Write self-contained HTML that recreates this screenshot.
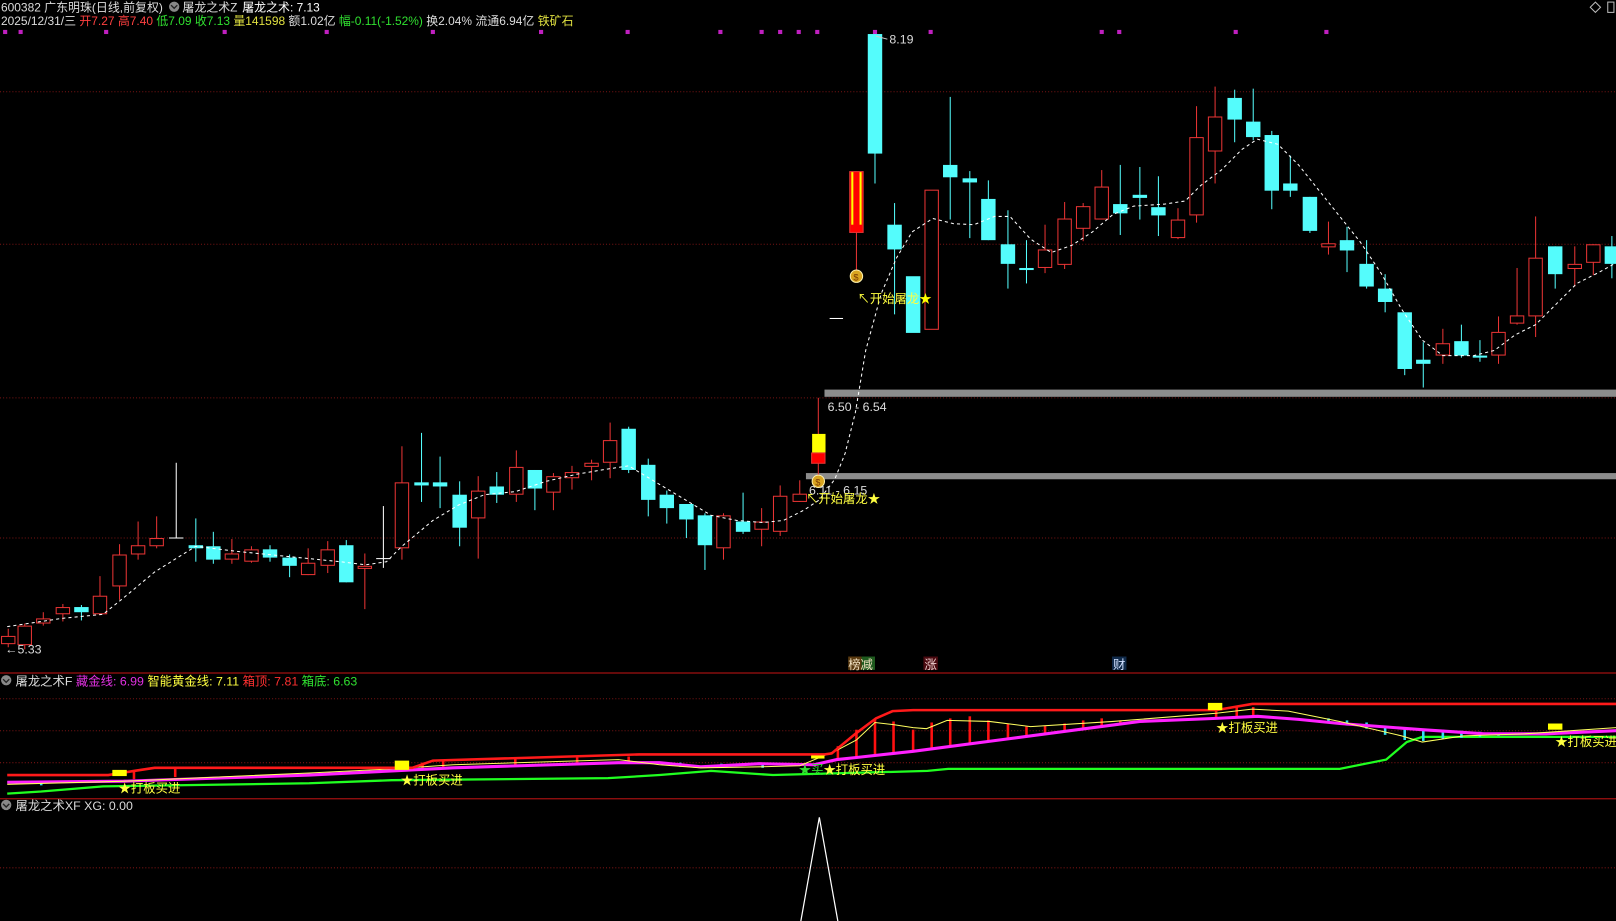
<!DOCTYPE html>
<html><head><meta charset="utf-8"><style>
html,body{margin:0;padding:0;background:#000;width:1616px;height:921px;overflow:hidden}
svg{display:block}
text{font-family:"Liberation Sans","Noto Sans CJK SC",sans-serif;font-size:12px}
.hd{font-size:11.6px}
.r{stroke:#e83434;fill:#000;stroke-width:1}
.rl{stroke:#e83434;stroke-width:1}
.c{fill:#54fcfc}
.cl{stroke:#54fcfc;stroke-width:1}
.g{stroke:#7a1414;stroke-width:1;stroke-dasharray:1 2}
</style></head><body>
<svg width="1616" height="921" viewBox="0 0 1568 893.6" xmlns="http://www.w3.org/2000/svg">
<rect x="0" y="0" width="1568" height="894" fill="#000"/>
<!-- header -->
<text class="hd" x="1" y="11" fill="#dcdcdc">600382 广东明珠(日线,前复权)</text>
<circle cx="169" cy="6.5" r="5" fill="#888"/><path d="M166 5l3 3 3-3" stroke="#222" fill="none" stroke-width="1.3"/>
<text class="hd" x="177" y="11" fill="#dcdcdc">屠龙之术Z</text>
<text class="hd" x="235" y="11" fill="#fff">屠龙之术: 7.13</text>
<text class="hd" x="1" y="24"><tspan fill="#dcdcdc">2025/12/31/三 </tspan><tspan fill="#ff4040">开7.27 高7.40 </tspan><tspan fill="#30e030">低7.09 </tspan><tspan fill="#30e030">收7.13 </tspan><tspan fill="#e0e040">量141598 </tspan><tspan fill="#dcdcdc">额1.02亿 </tspan><tspan fill="#30e030">幅-0.11(-1.52%) </tspan><tspan fill="#dcdcdc">换2.04% 流通6.94亿 </tspan><tspan fill="#e0e040">铁矿石</tspan></text>
<path d="M1548 2l5 5-5 5-5-5z" stroke="#bbb" fill="none"/>
<rect x="1560" y="2" width="6" height="10" stroke="#bbb" fill="none"/>
<g fill="#c020c0">
<rect x="3" y="29" width="4" height="4"/><rect x="18" y="29" width="4" height="4"/><rect x="101" y="29" width="4" height="4"/><rect x="216" y="29" width="4" height="4"/><rect x="315" y="29" width="4" height="4"/><rect x="418" y="29" width="4" height="4"/><rect x="523" y="29" width="4" height="4"/><rect x="607" y="29" width="4" height="4"/><rect x="697" y="29" width="4" height="4"/><rect x="737" y="29" width="4" height="4"/><rect x="755" y="29" width="4" height="4"/><rect x="773" y="29" width="4" height="4"/><rect x="791" y="29" width="4" height="4"/><rect x="847" y="29" width="4" height="4"/><rect x="901" y="29" width="4" height="4"/><rect x="1067" y="29" width="4" height="4"/><rect x="1084" y="29" width="4" height="4"/><rect x="1197" y="29" width="4" height="4"/><rect x="1285" y="29" width="4" height="4"/>
</g>
<!-- grid -->
<line class="g" x1="0" y1="89" x2="1568" y2="89"/>
<line class="g" x1="0" y1="237" x2="1568" y2="237"/>
<line class="g" x1="0" y1="386" x2="1568" y2="386"/>
<line class="g" x1="0" y1="522" x2="1568" y2="522"/>
<!-- gray bars -->
<rect x="800" y="378" width="768" height="7" fill="#8c8c8c"/>
<rect x="782" y="459" width="786" height="6" fill="#8c8c8c"/>
<!-- candles -->
<g id="candles">
<line class="rl" x1="8" y1="610" x2="8" y2="628"/><rect class="r" x="1.5" y="617.5" width="13" height="7"/>
<line class="rl" x1="24" y1="605" x2="24" y2="630"/><rect class="r" x="17.5" y="607.5" width="13" height="18"/>
<line class="rl" x1="42" y1="594" x2="42" y2="607"/><rect class="r" x="35.5" y="600.5" width="13" height="4"/>
<line class="rl" x1="61" y1="586" x2="61" y2="603"/><rect class="r" x="54.5" y="589.5" width="13" height="6"/>
<line class="cl" x1="79" y1="587" x2="79" y2="602"/><rect class="c" x="72" y="589" width="14" height="5"/>
<line class="rl" x1="97" y1="559" x2="97" y2="597"/><rect class="r" x="90.5" y="578.5" width="13" height="17"/>
<line class="rl" x1="116" y1="528" x2="116" y2="582"/><rect class="r" x="109.5" y="538.5" width="13" height="30"/>
<line class="rl" x1="134" y1="506" x2="134" y2="543"/><rect class="r" x="127.5" y="529.5" width="13" height="8"/>
<line class="rl" x1="152" y1="501" x2="152" y2="532"/><rect class="r" x="145.5" y="522.5" width="13" height="7"/>
<line stroke="#fff" x1="171" y1="449" x2="171" y2="522"/><line stroke="#fff" x1="164" y1="522" x2="178" y2="522"/>
<line class="cl" x1="190" y1="503" x2="190" y2="545"/><rect class="c" x="183" y="529" width="14" height="3"/>
<line class="cl" x1="207" y1="516" x2="207" y2="547"/><rect class="c" x="200" y="530" width="14" height="13"/>
<line class="rl" x1="225" y1="523" x2="225" y2="547"/><rect class="r" x="218.5" y="537.5" width="13" height="5"/>
<line class="rl" x1="244" y1="530" x2="244" y2="546"/><rect class="r" x="237.5" y="533.5" width="13" height="11"/>
<line class="cl" x1="262" y1="529" x2="262" y2="545"/><rect class="c" x="255" y="533" width="14" height="8"/>
<line class="cl" x1="281" y1="538" x2="281" y2="560"/><rect class="c" x="274" y="541" width="14" height="8"/>
<line class="rl" x1="299" y1="532" x2="299" y2="558"/><rect class="r" x="292.5" y="546.5" width="13" height="11"/>
<line class="rl" x1="318" y1="525" x2="318" y2="556"/><rect class="r" x="311.5" y="533.5" width="13" height="15"/>
<line class="cl" x1="336" y1="524" x2="336" y2="565"/><rect class="c" x="329" y="529" width="14" height="36"/>
<line class="rl" x1="354" y1="537" x2="354" y2="591"/><rect class="r" x="347.5" y="549.5" width="13" height="2"/>
<line stroke="#fff" x1="372" y1="491" x2="372" y2="551"/><line stroke="#fff" x1="365" y1="542" x2="379" y2="542"/>
<line class="rl" x1="390" y1="433" x2="390" y2="543"/><rect class="r" x="383.5" y="468.5" width="13" height="63"/>
<line class="cl" x1="409" y1="420" x2="409" y2="487"/><rect class="c" x="402" y="468" width="14" height="3"/>
<line class="cl" x1="427" y1="443" x2="427" y2="493"/><rect class="c" x="420" y="468" width="14" height="4"/>
<line class="cl" x1="446" y1="467" x2="446" y2="530"/><rect class="c" x="439" y="480" width="14" height="32"/>
<line class="rl" x1="464" y1="462" x2="464" y2="542"/><rect class="r" x="457.5" y="476.5" width="13" height="26"/>
<line class="cl" x1="482" y1="458" x2="482" y2="488"/><rect class="c" x="475" y="472" width="14" height="8"/>
<line class="rl" x1="501" y1="437" x2="501" y2="487"/><rect class="r" x="494.5" y="453.5" width="13" height="26"/>
<line class="cl" x1="519" y1="456" x2="519" y2="495"/><rect class="c" x="512" y="456" width="14" height="18"/>
<line class="rl" x1="537" y1="459" x2="537" y2="495"/><rect class="r" x="530.5" y="462.5" width="13" height="15"/>
<line class="rl" x1="555" y1="452" x2="555" y2="475"/><rect class="r" x="548.5" y="458.5" width="13" height="5"/>
<line class="rl" x1="574" y1="446" x2="574" y2="466"/><rect class="r" x="567.5" y="449.5" width="13" height="3"/>
<line class="rl" x1="592" y1="410" x2="592" y2="464"/><rect class="r" x="585.5" y="427.5" width="13" height="21"/>
<line class="cl" x1="610" y1="414" x2="610" y2="459"/><rect class="c" x="603" y="416" width="14" height="40"/>
<line class="cl" x1="629" y1="445" x2="629" y2="501"/><rect class="c" x="622" y="451" width="14" height="34"/>
<line class="cl" x1="647" y1="476" x2="647" y2="508"/><rect class="c" x="640" y="480" width="14" height="13"/>
<line class="cl" x1="666" y1="489" x2="666" y2="522"/><rect class="c" x="659" y="489" width="14" height="15"/>
<line class="cl" x1="684" y1="498" x2="684" y2="553"/><rect class="c" x="677" y="500" width="14" height="29"/>
<line class="rl" x1="702" y1="498" x2="702" y2="543"/><rect class="r" x="695.5" y="500.5" width="13" height="31"/>
<line class="cl" x1="721" y1="478" x2="721" y2="518"/><rect class="c" x="714" y="506" width="14" height="10"/>
<line class="rl" x1="739" y1="493" x2="739" y2="530"/><rect class="r" x="732.5" y="506.5" width="13" height="7"/>
<line class="rl" x1="757" y1="471" x2="757" y2="520"/><rect class="r" x="750.5" y="481.5" width="13" height="34"/>
<line class="rl" x1="776" y1="466" x2="776" y2="487"/><rect class="r" x="769.5" y="479.5" width="13" height="7"/>
<line class="rl" x1="794" y1="386" x2="794" y2="462"/>
<rect x="788" y="421" width="13" height="18" fill="#ffff00"/>
<rect x="787.5" y="439.5" width="13" height="10" fill="#ff0000" stroke="#e83434"/>
<line stroke="#fff" x1="805" y1="309" x2="818" y2="309"/>
<line class="rl" x1="831" y1="225" x2="831" y2="262"/>
<rect x="824.5" y="166.5" width="13" height="59" fill="#ff0000" stroke="#e83434"/>
<rect x="826" y="167" width="2" height="51" fill="#ffff00"/><rect x="834" y="167" width="2" height="51" fill="#ffff00"/>
<line class="cl" x1="849" y1="33" x2="849" y2="178"/><rect class="c" x="842" y="33" width="14" height="116"/>
<line class="cl" x1="868" y1="197" x2="868" y2="305"/><rect class="c" x="861" y="218" width="14" height="24"/>
<rect class="c" x="879" y="268" width="14" height="55"/>
<rect class="r" x="897.5" y="184.5" width="13" height="135"/>
<line class="cl" x1="922" y1="94" x2="922" y2="213"/><rect class="c" x="915" y="160" width="14" height="12"/>
<line class="cl" x1="941" y1="166" x2="941" y2="231"/><rect class="c" x="934" y="173" width="14" height="4"/>
<line class="cl" x1="959" y1="175" x2="959" y2="233"/><rect class="c" x="952" y="193" width="14" height="40"/>
<line class="cl" x1="978" y1="204" x2="978" y2="280"/><rect class="c" x="971" y="237" width="14" height="19"/>
<line class="cl" x1="996" y1="233" x2="996" y2="275"/><rect class="c" x="989" y="260" width="14" height="2"/>
<line class="rl" x1="1014" y1="218" x2="1014" y2="265"/><rect class="r" x="1007.5" y="242.5" width="13" height="17"/>
<line class="rl" x1="1033" y1="196" x2="1033" y2="261"/><rect class="r" x="1026.5" y="212.5" width="13" height="44"/>
<line class="rl" x1="1051" y1="197" x2="1051" y2="234"/><rect class="r" x="1044.5" y="200.5" width="13" height="21"/>
<line class="rl" x1="1069" y1="165" x2="1069" y2="212"/><rect class="r" x="1062.5" y="181.5" width="13" height="31"/>
<line class="cl" x1="1087" y1="160" x2="1087" y2="228"/><rect class="c" x="1080" y="198" width="14" height="9"/>
<line class="cl" x1="1106" y1="162" x2="1106" y2="213"/><rect class="c" x="1099" y="189" width="14" height="3"/>
<line class="cl" x1="1124" y1="171" x2="1124" y2="229"/><rect class="c" x="1117" y="201" width="14" height="8"/>
<line class="rl" x1="1143" y1="202" x2="1143" y2="232"/><rect class="r" x="1136.5" y="213.5" width="13" height="17"/>
<line class="rl" x1="1161" y1="103" x2="1161" y2="216"/><rect class="r" x="1154.5" y="133.5" width="13" height="75"/>
<line class="rl" x1="1179" y1="84" x2="1179" y2="178"/><rect class="r" x="1172.5" y="113.5" width="13" height="33"/>
<line class="cl" x1="1198" y1="87" x2="1198" y2="138"/><rect class="c" x="1191" y="95" width="14" height="21"/>
<line class="cl" x1="1216" y1="86" x2="1216" y2="136"/><rect class="c" x="1209" y="118" width="14" height="15"/>
<line class="cl" x1="1234" y1="127" x2="1234" y2="203"/><rect class="c" x="1227" y="131" width="14" height="54"/>
<line class="cl" x1="1252" y1="151" x2="1252" y2="191"/><rect class="c" x="1245" y="178" width="14" height="7"/>
<line class="cl" x1="1271" y1="191" x2="1271" y2="226"/><rect class="c" x="1264" y="191" width="14" height="33"/>
<line class="rl" x1="1289" y1="215" x2="1289" y2="247"/><rect class="r" x="1282.5" y="236.5" width="13" height="3"/>
<line class="cl" x1="1307" y1="220" x2="1307" y2="264"/><rect class="c" x="1300" y="233" width="14" height="10"/>
<line class="cl" x1="1326" y1="233" x2="1326" y2="280"/><rect class="c" x="1319" y="256" width="14" height="22"/>
<line class="cl" x1="1344" y1="266" x2="1344" y2="303"/><rect class="c" x="1337" y="280" width="14" height="13"/>
<line class="cl" x1="1363" y1="303" x2="1363" y2="364"/><rect class="c" x="1356" y="303" width="14" height="55"/>
<line class="cl" x1="1381" y1="332" x2="1381" y2="376"/><rect class="c" x="1374" y="349" width="14" height="4"/>
<line class="rl" x1="1400" y1="319" x2="1400" y2="353"/><rect class="r" x="1393.5" y="333.5" width="13" height="11"/>
<line class="cl" x1="1418" y1="315" x2="1418" y2="347"/><rect class="c" x="1411" y="331" width="14" height="14"/>
<line class="cl" x1="1436" y1="330" x2="1436" y2="351"/><rect class="c" x="1429" y="345" width="14" height="2"/>
<line class="rl" x1="1454" y1="307" x2="1454" y2="353"/><rect class="r" x="1447.5" y="322.5" width="13" height="22"/>
<line class="rl" x1="1472" y1="260" x2="1472" y2="315"/><rect class="r" x="1465.5" y="306.5" width="13" height="7"/>
<line class="rl" x1="1490" y1="210" x2="1490" y2="327"/><rect class="r" x="1483.5" y="250.5" width="13" height="56"/>
<line class="cl" x1="1509" y1="239" x2="1509" y2="280"/><rect class="c" x="1502" y="239" width="14" height="27"/>
<line class="rl" x1="1528" y1="239" x2="1528" y2="278"/><rect class="r" x="1521.5" y="256.5" width="13" height="4"/>
<line class="rl" x1="1546" y1="237" x2="1546" y2="267"/><rect class="r" x="1539.5" y="237.5" width="13" height="17"/>
<line class="cl" x1="1564" y1="229" x2="1564" y2="270"/><rect class="c" x="1557" y="239" width="11" height="17"/>
</g>
<polyline fill="none" stroke="#fff" stroke-width="1" stroke-dasharray="3 3" points="7,608 60,600 100,596 120,580 150,555 190,530 230,535 280,540 330,545 355,548 375,545 390,530 420,505 445,490 470,480 500,477 530,467 560,460 590,455 610,452 640,470 665,485 690,500 715,505 740,507 760,505 780,495 795,485 810,465 820,440 830,400 840,340 855,285 870,250 885,225 905,212 925,217 945,218 965,210 980,210 1000,232 1020,245 1040,238 1060,225 1080,208 1100,200 1130,198 1150,195 1165,180 1185,165 1205,145 1220,135 1240,140 1260,160 1280,185 1300,210 1320,235 1340,265 1360,300 1380,330 1400,345 1430,345 1450,340 1470,325 1490,315 1510,295 1530,275 1550,265 1568,255"/>
<g>
<circle cx="831" cy="268" r="6" fill="#d9a520" stroke="#fff3b0" stroke-width="1"/><text x="828" y="272" fill="#7a3a00" style="font-size:9px">$</text>
<circle cx="794" cy="467" r="6" fill="#d9a520" stroke="#fff3b0" stroke-width="1"/><text x="791" y="471" fill="#7a3a00" style="font-size:9px">$</text>
</g>
<text x="863" y="42" fill="#dcdcdc">8.19</text><line x1="850" y1="35" x2="861" y2="38" stroke="#ccc"/>
<text x="803" y="399" fill="#dcdcdc">6.50 - 6.54</text>
<text x="785" y="480" fill="#dcdcdc">6.11 - 6.15</text>
<text x="832" y="294" fill="#ffff40">↖开始屠龙<tspan fill="#ffff00">★</tspan></text>
<text x="782" y="488" fill="#ffff40">↖开始屠龙★</text>
<text x="5" y="634" fill="#dcdcdc">←5.33</text>
<rect x="823" y="637" width="13" height="13" fill="#5a3a10"/><rect x="836" y="637" width="13" height="13" fill="#1e5a1e"/>
<text x="823" y="649" fill="#f0e0c0">榜减</text>
<rect x="896" y="637" width="14" height="13" fill="#4a0a10"/><text x="897" y="649" fill="#f0d0d0">涨</text>
<rect x="1079" y="637" width="14" height="13" fill="#102a4a"/><text x="1080" y="649" fill="#d0e0ff">财</text>
<line x1="0" y1="653" x2="1568" y2="653" stroke="#a01010" stroke-width="1.2"/>
<circle cx="6" cy="660" r="5" fill="#888"/><path d="M3 659l3 3 3-3" stroke="#222" fill="none" stroke-width="1.3"/>
<text x="15" y="665"><tspan fill="#dcdcdc">屠龙之术F </tspan><tspan fill="#e030e0">藏金线: 6.99 </tspan><tspan fill="#ffff40">智能黄金线: 7.11 </tspan><tspan fill="#ff3030">箱顶: 7.81 </tspan><tspan fill="#30e030">箱底: 6.63</tspan></text>
<line class="g" x1="0" y1="678" x2="1568" y2="678"/>
<line class="g" x1="0" y1="709" x2="1568" y2="709"/>
<line class="g" x1="0" y1="740" x2="1568" y2="740"/>
<polyline fill="none" stroke="#20ff20" stroke-width="2.2" points="7,770 40,768 100,763 300,760 380,757 590,755 640,752 690,748 750,752 900,748 920,746 1300,746 1330,740 1345,737 1365,720 1380,715 1568,715"/>
<g stroke="#ff1010" stroke-width="2.5">
<line x1="813" y1="724" x2="813" y2="737"/><line x1="831" y1="708" x2="831" y2="735"/><line x1="849" y1="698" x2="849" y2="733"/><line x1="867" y1="700" x2="867" y2="731"/><line x1="886" y1="708" x2="886" y2="729"/><line x1="904" y1="701" x2="904" y2="727"/><line x1="922" y1="697" x2="922" y2="724"/><line x1="941" y1="695" x2="941" y2="722"/><line x1="959" y1="699" x2="959" y2="719"/><line x1="978" y1="702" x2="978" y2="717"/><line x1="996" y1="705" x2="996" y2="714"/><line x1="1014" y1="704" x2="1014" y2="712"/><line x1="1033" y1="702" x2="1033" y2="709"/><line x1="1051" y1="699" x2="1051" y2="707"/><line x1="1069" y1="697" x2="1069" y2="705"/><line x1="1087" y1="699" x2="1087" y2="703"/>
<line x1="130" y1="749" x2="130" y2="756"/><line x1="170" y1="746" x2="170" y2="754"/><line x1="410" y1="740" x2="410" y2="747"/><line x1="430" y1="737" x2="430" y2="745"/><line x1="500" y1="736" x2="500" y2="743"/><line x1="560" y1="735" x2="560" y2="742"/><line x1="610" y1="734" x2="610" y2="741"/><line x1="1180" y1="688" x2="1180" y2="697"/><line x1="1200" y1="686" x2="1200" y2="696"/><line x1="1216" y1="686" x2="1216" y2="695"/>
</g>
<g stroke="#30e0f0" stroke-width="2.5">
<line x1="1289" y1="697" x2="1289" y2="701"/><line x1="1307" y1="699" x2="1307" y2="704"/><line x1="1326" y1="701" x2="1326" y2="707"/><line x1="1344" y1="704" x2="1344" y2="713"/><line x1="1363" y1="706" x2="1363" y2="718"/><line x1="1381" y1="707" x2="1381" y2="719"/><line x1="1400" y1="708" x2="1400" y2="717"/><line x1="1418" y1="709" x2="1418" y2="716"/><line x1="1436" y1="710" x2="1436" y2="715"/><line x1="1454" y1="711" x2="1454" y2="714"/>
<line x1="660" y1="740" x2="660" y2="744"/><line x1="700" y1="741" x2="700" y2="745"/><line x1="740" y1="741" x2="740" y2="745"/><line x1="40" y1="758" x2="40" y2="762"/>
</g>
<polyline fill="none" stroke="#ff20ff" stroke-width="3" points="7,759 120,758 300,752 380,748 440,745 600,740 640,740 680,744 737,741 790,742 812,737 831,735 886,729 977,717 1106,700 1180,697 1220,695 1260,698 1300,702 1380,708 1440,712 1500,712 1568,709"/>
<polyline fill="none" stroke="#ffff60" stroke-width="1" points="7,761 120,758 300,750 380,746 440,742 600,737 640,742 680,745 737,744 776,743 812,728 831,718 849,701 866,703 886,706 899,707 919,699 960,700 1000,705 1080,700 1180,692 1215,688 1250,690 1300,700 1360,714 1380,720 1420,714 1480,712 1568,706"/>
<polyline fill="none" stroke="#ff1a1a" stroke-width="2.5" points="7,752 105,752 130,748 150,745 400,745 420,738 620,732 800,732 807,731 830,712 850,697 866,690 886,689 1180,689 1215,683 1568,683"/>
<g fill="#ffff00">
<rect x="109" y="747" width="14" height="6"/><rect x="383" y="738" width="14" height="9"/><rect x="787" y="733" width="13" height="3"/><rect x="1172" y="682" width="14" height="7"/><rect x="1502" y="702" width="14" height="6"/>
</g>
<text x="115" y="769" fill="#ffff40">★打板买进</text>
<text x="389" y="761" fill="#ffff40">★打板买进</text>
<text x="775" y="751"><tspan fill="#30e030">★买</tspan><tspan fill="#ffff40">★打板买进</tspan></text>
<text x="1180" y="710" fill="#ffff40">★打板买进</text>
<text x="1509" y="724" fill="#ffff40">★打板买进</text>
<line x1="0" y1="775" x2="1568" y2="775" stroke="#a01010" stroke-width="1.2"/>
<circle cx="6" cy="781" r="5" fill="#888"/><path d="M3 780l3 3 3-3" stroke="#222" fill="none" stroke-width="1.3"/>
<text x="15" y="786" fill="#dcdcdc">屠龙之术XF  XG: 0.00</text>
<line class="g" x1="0" y1="842" x2="1568" y2="842"/>
<polyline fill="none" stroke="#fff" stroke-width="1.2" points="777,894 795,793 813,894"/>
</svg>
</body></html>
